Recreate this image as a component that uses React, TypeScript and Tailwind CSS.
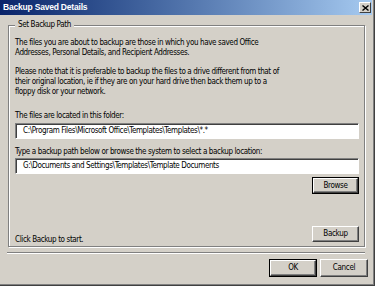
import React from 'react'

const font = { fontFamily: '"DejaVu Sans Condensed", "Liberation Sans", sans-serif' }

function Button({ label, isDefault = false, className = '' }: { label: string; isDefault?: boolean; className?: string }) {
  // Classic raised 3D button; default button gets an extra black frame
  return (
    <div className={`${isDefault ? 'border border-black' : ''} ${className}`}>
      <div className="h-full w-full border-t border-l border-t-white border-l-white border-b border-r border-b-[#404040] border-r-[#404040] bg-[#d4d0c8] shadow-[inset_-1px_-1px_0_#808080] flex items-center justify-center text-[8px] tracking-[-0.35px] text-black">
        {label}
      </div>
    </div>
  )
}

function Field({ value }: { value: string }) {
  return (
    <div className="h-[16px] w-full border-t border-l border-t-[#808080] border-l-[#808080] border-b border-r border-b-white border-r-white">
      <div className="h-full w-full bg-white shadow-[inset_1px_1px_0_#404040] flex items-center pl-[7px] text-[8px] tracking-[-0.38px] text-black whitespace-nowrap overflow-hidden">
        {value}
      </div>
    </div>
  )
}

export default function App() {
  return (
    <div className="w-[375px] h-[286px] bg-[#404040] pr-px pb-px" style={font}>
      <div className="w-full h-full bg-[#808080] pr-px pb-px">
        <div className="w-full h-full bg-[#d4d0c8] pr-px flex flex-col">
          {/* Title bar */}
          <div className="h-[15px] flex items-center justify-between bg-gradient-to-r from-[#0a246a] to-[#a6caf0] pl-[3px] pr-[1px]">
            <span className="text-white font-bold text-[8.5px] tracking-[-0.2px] leading-none" style={{ fontFamily: '"Liberation Sans", sans-serif' }}>
              Backup Saved Details
            </span>
            <div className="w-[12px] h-[11px] border-t border-l border-t-white border-l-white border-b border-r border-b-[#404040] border-r-[#404040] bg-[#d4d0c8] flex items-center justify-center">
              <svg width="7" height="6" viewBox="0 0 7 6">
                <path d="M0.5 0.5 L6.5 5.5 M6.5 0.5 L0.5 5.5" stroke="black" strokeWidth="1.4" />
              </svg>
            </div>
          </div>

          {/* Group box */}
          <div className="px-[8px] pt-[10px]">
            <div className="relative h-[222px] w-[357px] border border-[#808080] shadow-[inset_1px_1px_0_#ffffff,1px_1px_0_#ffffff] flex flex-col pl-[6px] pr-[5px] pt-[12px] text-[8px] tracking-[-0.38px] leading-[10px] text-black">
              <span className="absolute -top-[6px] left-[6px] bg-[#d4d0c8] px-[3px] leading-[10px]">Set Backup Path</span>
              <p>
                The files you are about to backup are those in which you have saved Office
                <br />
                Addresses, Personal Details, and Recipient Addresses.
              </p>
              <p className="mt-[9px]">
                Please note that it is preferable to backup the files to a drive different from that of
                <br />
                their original location, ie if they are on your hard drive then back them up to a
                <br />
                floppy disk or your network.
              </p>
              <p className="mt-[14px]">The files are located in this folder:</p>
              <div className="mt-[2px]">
                <Field value="C:\Program Files\Microsoft Office\Templates\Templates\*.*" />
              </div>
              <p className="mt-[8px]">Type a backup path below or browse the system to select a backup location:</p>
              <div className="mt-[1px]">
                <Field value="G:\Documents and Settings\Templates\Template Documents" />
              </div>
              <Button label="Browse" isDefault className="mt-[3px] self-end w-[47px] h-[17px]" />
              <div className="mt-auto mb-[1px] flex items-end justify-between">
                <span>Click Backup to start.</span>
                <Button label="Backup" className="mb-[3px] w-[47px] h-[16px]" />
              </div>
            </div>
          </div>

          {/* Separator */}
          <div className="mx-[7px] mt-[5px] h-[2px] border-t border-t-[#808080] border-b border-b-white" />

          {/* Dialog buttons */}
          <div className="mt-[5px] flex justify-end gap-[3px] pr-[4px]">
            <Button label="OK" isDefault className="w-[48px] h-[18px]" />
            <Button label="Cancel" className="w-[48px] h-[18px]" />
          </div>
        </div>
      </div>
    </div>
  )
}
